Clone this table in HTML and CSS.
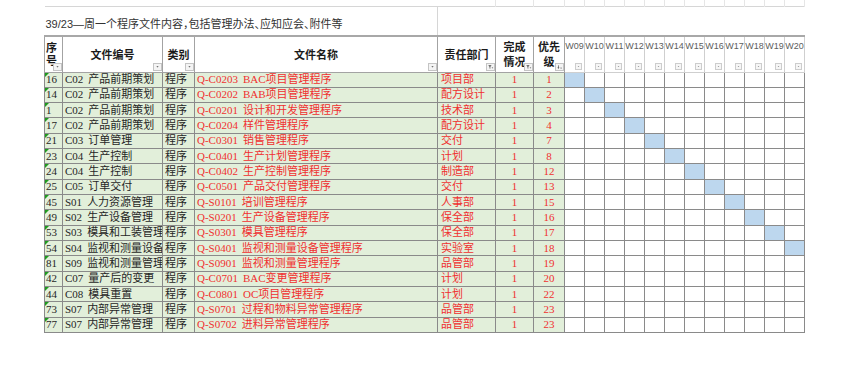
FILE: index.html
```html
<!DOCTYPE html>
<html lang="zh-CN">
<head>
<meta charset="utf-8">
<title>程序文件计划</title>
<link rel="stylesheet" href="styles.css">
</head>
<body>
<div class="sheet">
<table class="grid">
<colgroup>
<col class="c-no"><col class="c-code"><col class="c-type"><col class="c-name"><col class="c-dept"><col class="c-done"><col class="c-pri">
<col class="c-wk"><col class="c-wk"><col class="c-wk"><col class="c-wk"><col class="c-wk"><col class="c-wk"><col class="c-wk"><col class="c-wk"><col class="c-wk"><col class="c-wk"><col class="c-wk"><col class="c-wk">
</colgroup>
<tr class="ghost">
<td colspan="5" class="g-blank"></td><td class="g"></td><td class="g"></td>
<td class="g"></td><td class="g"></td><td class="g"></td><td class="g"></td><td class="g"></td><td class="g"></td><td class="g"></td><td class="g"></td><td class="g"></td><td class="g"></td><td class="g"></td><td class="g"></td>
</tr>
<tr class="title-row">
<td colspan="4" class="title">39/23—周一个程序文件内容，包括管理办法、应知应会、附件等</td>
<td colspan="15" class="title-rest"></td>
</tr>
<tr class="head-row">
<th class="h h-no"><span class="stack tight">序<br>号</span><span class="fbtn"><svg viewBox="0 0 9 8"><polygon points="3,3 6,3 4.5,4.8" fill="#4a4a4a"/></svg></span></th>
<th class="h">文件编号<span class="fbtn"><svg viewBox="0 0 9 8"><polygon points="3,3 6,3 4.5,4.8" fill="#4a4a4a"/></svg></span></th>
<th class="h">类别<span class="fbtn"><svg viewBox="0 0 9 8"><polygon points="3,3 6,3 4.5,4.8" fill="#4a4a4a"/></svg></span></th>
<th class="h">文件名称<span class="fbtn"><svg viewBox="0 0 9 8"><polygon points="3,3 6,3 4.5,4.8" fill="#4a4a4a"/></svg></span></th>
<th class="h">责任部门<span class="fbtn"><svg viewBox="0 0 9 8"><polygon points="1.5,1.8 6,1.8 4.2,3.8 4.2,6.4 3.3,5.9 3.3,3.8" fill="#4a4a4a"/><polygon points="6,4.6 8.2,4.6 7.1,6" fill="#4a4a4a"/></svg></span></th>
<th class="h"><span class="stack">完成<br>情况</span><span class="fbtn"><svg viewBox="0 0 9 8"><polygon points="1.5,1.8 6,1.8 4.2,3.8 4.2,6.4 3.3,5.9 3.3,3.8" fill="#4a4a4a"/><polygon points="6,4.6 8.2,4.6 7.1,6" fill="#4a4a4a"/></svg></span></th>
<th class="h"><span class="stack">优先<br>级</span><span class="fbtn"><svg viewBox="0 0 9 8"><rect x="2.6" y="1.8" width="0.9" height="3.6" fill="#4a4a4a"/><polygon points="1.6,4.6 4.5,4.6 3.05,6.4" fill="#4a4a4a"/><polygon points="5.4,5 7.8,5 6.6,6.2" fill="#4a4a4a"/></svg></span></th>
<th class="wh">W09<span class="wbtn"><svg viewBox="0 0 7 7"><polygon points="2.4,3 4.6,3 3.5,4.3" fill="#555"/></svg></span></th>
<th class="wh">W10<span class="wbtn"><svg viewBox="0 0 7 7"><polygon points="2.4,3 4.6,3 3.5,4.3" fill="#555"/></svg></span></th>
<th class="wh">W11<span class="wbtn"><svg viewBox="0 0 7 7"><polygon points="2.4,3 4.6,3 3.5,4.3" fill="#555"/></svg></span></th>
<th class="wh">W12<span class="wbtn"><svg viewBox="0 0 7 7"><polygon points="2.4,3 4.6,3 3.5,4.3" fill="#555"/></svg></span></th>
<th class="wh">W13<span class="wbtn"><svg viewBox="0 0 7 7"><polygon points="2.4,3 4.6,3 3.5,4.3" fill="#555"/></svg></span></th>
<th class="wh">W14<span class="wbtn"><svg viewBox="0 0 7 7"><polygon points="2.4,3 4.6,3 3.5,4.3" fill="#555"/></svg></span></th>
<th class="wh">W15<span class="wbtn"><svg viewBox="0 0 7 7"><polygon points="2.4,3 4.6,3 3.5,4.3" fill="#555"/></svg></span></th>
<th class="wh">W16<span class="wbtn"><svg viewBox="0 0 7 7"><polygon points="2.4,3 4.6,3 3.5,4.3" fill="#555"/></svg></span></th>
<th class="wh">W17<span class="wbtn"><svg viewBox="0 0 7 7"><polygon points="2.4,3 4.6,3 3.5,4.3" fill="#555"/></svg></span></th>
<th class="wh">W18<span class="wbtn"><svg viewBox="0 0 7 7"><polygon points="2.4,3 4.6,3 3.5,4.3" fill="#555"/></svg></span></th>
<th class="wh">W19<span class="wbtn"><svg viewBox="0 0 7 7"><polygon points="2.4,3 4.6,3 3.5,4.3" fill="#555"/></svg></span></th>
<th class="wh">W20<span class="wbtn"><svg viewBox="0 0 7 7"><polygon points="2.4,3 4.6,3 3.5,4.3" fill="#555"/></svg></span></th>
</tr>
<tr><td class="no">16</td><td class="code"><span class="pre">C02</span>产品前期策划</td><td class="type">程序</td><td class="name"><span class="qno">Q-C0203</span>BAC项目管理程序</td><td class="dept">项目部</td><td class="num">1</td><td class="num">1</td><td class="on"></td><td></td><td></td><td></td><td></td><td></td><td></td><td></td><td></td><td></td><td></td><td></td></tr>
<tr><td class="no">14</td><td class="code"><span class="pre">C02</span>产品前期策划</td><td class="type">程序</td><td class="name"><span class="qno">Q-C0202</span>BAB项目管理程序</td><td class="dept">配方设计</td><td class="num">1</td><td class="num">2</td><td></td><td class="on"></td><td></td><td></td><td></td><td></td><td></td><td></td><td></td><td></td><td></td><td></td></tr>
<tr><td class="no">1</td><td class="code"><span class="pre">C02</span>产品前期策划</td><td class="type">程序</td><td class="name"><span class="qno">Q-C0201</span>设计和开发管理程序</td><td class="dept">技术部</td><td class="num">1</td><td class="num">3</td><td></td><td></td><td class="on"></td><td></td><td></td><td></td><td></td><td></td><td></td><td></td><td></td><td></td></tr>
<tr><td class="no">17</td><td class="code"><span class="pre">C02</span>产品前期策划</td><td class="type">程序</td><td class="name"><span class="qno">Q-C0204</span>样件管理程序</td><td class="dept">配方设计</td><td class="num">1</td><td class="num">4</td><td></td><td></td><td></td><td class="on"></td><td></td><td></td><td></td><td></td><td></td><td></td><td></td><td></td></tr>
<tr><td class="no">21</td><td class="code"><span class="pre">C03</span>订单管理</td><td class="type">程序</td><td class="name"><span class="qno">Q-C0301</span>销售管理程序</td><td class="dept">交付</td><td class="num">1</td><td class="num">7</td><td></td><td></td><td></td><td></td><td class="on"></td><td></td><td></td><td></td><td></td><td></td><td></td><td></td></tr>
<tr><td class="no">23</td><td class="code"><span class="pre">C04</span>生产控制</td><td class="type">程序</td><td class="name"><span class="qno">Q-C0401</span>生产计划管理程序</td><td class="dept">计划</td><td class="num">1</td><td class="num">8</td><td></td><td></td><td></td><td></td><td></td><td class="on"></td><td></td><td></td><td></td><td></td><td></td><td></td></tr>
<tr><td class="no">24</td><td class="code"><span class="pre">C04</span>生产控制</td><td class="type">程序</td><td class="name"><span class="qno">Q-C0402</span>生产控制管理程序</td><td class="dept">制造部</td><td class="num">1</td><td class="num">12</td><td></td><td></td><td></td><td></td><td></td><td></td><td class="on"></td><td></td><td></td><td></td><td></td><td></td></tr>
<tr><td class="no">25</td><td class="code"><span class="pre">C05</span>订单交付</td><td class="type">程序</td><td class="name"><span class="qno">Q-C0501</span>产品交付管理程序</td><td class="dept">交付</td><td class="num">1</td><td class="num">13</td><td></td><td></td><td></td><td></td><td></td><td></td><td></td><td class="on"></td><td></td><td></td><td></td><td></td></tr>
<tr><td class="no">45</td><td class="code"><span class="pre">S01</span>人力资源管理</td><td class="type">程序</td><td class="name"><span class="qno">Q-S0101</span>培训管理程序</td><td class="dept">人事部</td><td class="num">1</td><td class="num">15</td><td></td><td></td><td></td><td></td><td></td><td></td><td></td><td></td><td class="on"></td><td></td><td></td><td></td></tr>
<tr><td class="no">49</td><td class="code"><span class="pre">S02</span>生产设备管理</td><td class="type">程序</td><td class="name"><span class="qno">Q-S0201</span>生产设备管理程序</td><td class="dept">保全部</td><td class="num">1</td><td class="num">16</td><td></td><td></td><td></td><td></td><td></td><td></td><td></td><td></td><td></td><td class="on"></td><td></td><td></td></tr>
<tr><td class="no">53</td><td class="code"><span class="pre">S03</span>模具和工装管理</td><td class="type">程序</td><td class="name"><span class="qno">Q-S0301</span>模具管理程序</td><td class="dept">保全部</td><td class="num">1</td><td class="num">17</td><td></td><td></td><td></td><td></td><td></td><td></td><td></td><td></td><td></td><td></td><td class="on"></td><td></td></tr>
<tr><td class="no">54</td><td class="code"><span class="pre">S04</span>监视和测量设备管理</td><td class="type">程序</td><td class="name"><span class="qno">Q-S0401</span>监视和测量设备管理程序</td><td class="dept">实验室</td><td class="num">1</td><td class="num">18</td><td></td><td></td><td></td><td></td><td></td><td></td><td></td><td></td><td></td><td></td><td></td><td class="on"></td></tr>
<tr><td class="no">81</td><td class="code"><span class="pre">S09</span>监视和测量管理</td><td class="type">程序</td><td class="name"><span class="qno">Q-S0901</span>监视和测量管理程序</td><td class="dept">品管部</td><td class="num">1</td><td class="num">19</td><td></td><td></td><td></td><td></td><td></td><td></td><td></td><td></td><td></td><td></td><td></td><td></td></tr>
<tr><td class="no">42</td><td class="code"><span class="pre">C07</span>量产后的变更</td><td class="type">程序</td><td class="name"><span class="qno">Q-C0701</span>BAC变更管理程序</td><td class="dept">计划</td><td class="num">1</td><td class="num">20</td><td></td><td></td><td></td><td></td><td></td><td></td><td></td><td></td><td></td><td></td><td></td><td></td></tr>
<tr><td class="no">44</td><td class="code"><span class="pre">C08</span>模具重置</td><td class="type">程序</td><td class="name"><span class="qno">Q-C0801</span>OC项目管理程序</td><td class="dept">计划</td><td class="num">1</td><td class="num">22</td><td></td><td></td><td></td><td></td><td></td><td></td><td></td><td></td><td></td><td></td><td></td><td></td></tr>
<tr><td class="no">73</td><td class="code"><span class="pre">S07</span>内部异常管理</td><td class="type">程序</td><td class="name"><span class="qno">Q-S0701</span>过程和物料异常管理程序</td><td class="dept">品管部</td><td class="num">1</td><td class="num">23</td><td></td><td></td><td></td><td></td><td></td><td></td><td></td><td></td><td></td><td></td><td></td><td></td></tr>
<tr><td class="no">77</td><td class="code"><span class="pre">S07</span>内部异常管理</td><td class="type">程序</td><td class="name"><span class="qno">Q-S0702</span>进料异常管理程序</td><td class="dept">品管部</td><td class="num">1</td><td class="num">23</td><td></td><td></td><td></td><td></td><td></td><td></td><td></td><td></td><td></td><td></td><td></td><td></td></tr>
</table>
</div>
</body>
</html>
```
FILE: styles.css
```css
html, body {
  margin: 0;
  padding: 0;
  background: #ffffff;
}

.sheet {
  padding: 0 0 0 44px;
}

.grid {
  border-collapse: collapse;
  table-layout: fixed;
  width: 760px;
  font-family: "Liberation Serif", "Noto Sans CJK SC", serif;
  font-size: 11px;
  color: #262626;
}

.grid td, .grid th {
  box-sizing: border-box;
}

col.c-no { width: 18px; }
col.c-code { width: 100px; }
col.c-type { width: 32px; }
col.c-name { width: 243px; }
col.c-dept { width: 58px; }
col.c-done { width: 38px; }
col.c-pri { width: 31px; }
col.c-wk { width: 20px; }

/* faint cut-off row above the title */
.ghost td {
  height: 6px;
  padding: 0;
  border: none;
}
.ghost td.g {
  border-left: 1px solid #e6e6e6;
  border-right: 1px solid #e6e6e6;
}

/* title row */
.title-row td {
  height: 30px;
  padding: 4px 0 0 1px;
  border-top: 1px solid #d6d6d6;
  vertical-align: middle;
}
.title {
  font-family: "Liberation Sans", "Noto Sans CJK SC", sans-serif;
  font-size: 11px;
  color: #333333;
  white-space: nowrap;
  font-feature-settings: "halt";
  border-right: 1px solid #d6d6d6;
}

/* header row */
.head-row th {
  height: 36px;
  padding: 0;
  position: relative;
  border-top: 2px solid #a8a8a8;
  vertical-align: middle;
}
.h {
  font-family: "Noto Sans CJK SC", "Liberation Sans", sans-serif;
  font-weight: 700;
  font-size: 11px;
  color: #1a1a1a;
  text-align: center;
  border-left: 1px solid #a3a3a3;
  border-right: 1px solid #a3a3a3;
  border-bottom: 1px solid #a3a3a3;
  white-space: nowrap;
  overflow: hidden;
}
.head-row th.h-no {
  text-align: left;
  padding-left: 1px;
}
.stack {
  display: inline-block;
  line-height: 15px;
  text-align: center;
}
.stack.tight {
  line-height: 12.5px;
}

.fbtn {
  position: absolute;
  right: 0;
  bottom: 1px;
  width: 9px;
  height: 8px;
  box-sizing: border-box;
  border: 1px solid #c4c4c4;
  background: #f4f4f4;
}
.fbtn svg, .wbtn svg {
  display: block;
  width: 100%;
  height: 100%;
}

.wh {
  font-family: "Liberation Sans", sans-serif;
  font-weight: 400;
  font-size: 9px;
  color: #5c5c5c;
  text-align: center;
  line-height: 11px;
  border-left: 1px solid #cfcfcf;
  border-right: 1px solid #cfcfcf;
  border-bottom: 1px solid #cfcfcf;
  white-space: nowrap;
  overflow: hidden;
}
.head-row th.wh {
  padding-top: 4px;
  vertical-align: top;
}
.wbtn {
  position: absolute;
  right: 2px;
  bottom: 2px;
  width: 7px;
  height: 7px;
  box-sizing: border-box;
  border: 1px solid #cdcdcd;
  background: #f6f6f6;
}

/* data rows */
.grid td {
  overflow: hidden;
  white-space: nowrap;
}
.grid tr + tr + tr + tr td {
  height: 15.33px;
  padding: 0;
  line-height: 13px;
  border: 1px solid #8a8a8a;
  vertical-align: middle;
}

td.no, td.code, td.type, td.name, td.dept, td.num {
  background: #e2efda;
}
td.no {
  position: relative;
}
.grid tr + tr + tr + tr td.no {
  padding-left: 1px;
}
td.no::before {
  content: "";
  position: absolute;
  left: 0;
  top: 0;
  border-top: 4px solid #1f9a1f;
  border-right: 4px solid transparent;
}
.grid tr + tr + tr + tr td.code,
.grid tr + tr + tr + tr td.type,
.grid tr + tr + tr + tr td.name {
  padding-left: 2px;
}
.grid tr + tr + tr + tr td.dept {
  padding-left: 3px;
}
td.name, td.dept, td.num {
  color: #f03030;
}
td.num {
  text-align: center;
}
.pre {
  margin-right: 5px;
}
.qno {
  margin-right: 5px;
}
.grid tr + tr + tr + tr td.on {
  background: #bdd7ee;
}
```
